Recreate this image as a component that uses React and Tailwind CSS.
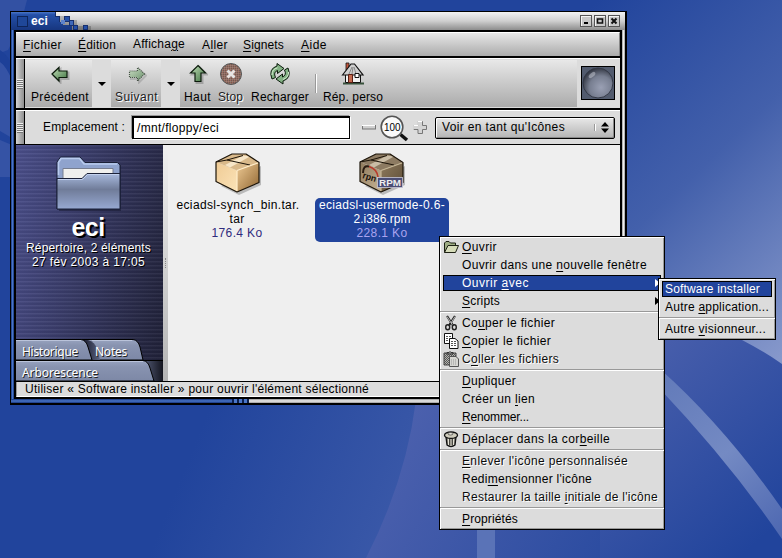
import React, { useLayoutEffect, useRef, useState } from "react";

/* One line of text tracked to a given width; "_" marks the mnemonic letter. */
function T({ w, children, className = "" }) {
  const ref = useRef(null);
  const [ls, setLs] = useState(0);
  const text = children;
  const at = text.search(/_(?=[A-Za-zÀ-ÿ])/);
  const marked = at >= 0 && !text.includes("synch");
  const plain = marked ? text.slice(0, at) + text.slice(at + 1) : text;
  useLayoutEffect(() => {
    const el = ref.current;
    const prev = el.style.letterSpacing;
    el.style.letterSpacing = "0px";
    const natural = el.getBoundingClientRect().width;
    el.style.letterSpacing = prev;
    setLs((w - natural) / plain.length);
  }, [w, plain]);
  return (
    <div className={"shrink-0 whitespace-pre " + className} style={{ width: w }}>
      <span ref={ref} style={{ letterSpacing: ls }}>
        {marked ? (
          <>
            {text.slice(0, at)}
            <span className="underline decoration-1 underline-offset-2">{text[at + 1]}</span>
            {text.slice(at + 2)}
          </>
        ) : (
          text
        )}
      </span>
    </div>
  );
}

const ETCH = "text-[#0c0c0c] [text-shadow:1px_1px_0_#fff]";

function Wallpaper() {
  return (
    <svg className="absolute inset-0" width="782" height="558">
      <defs>
        <linearGradient id="wa" gradientUnits="userSpaceOnUse" x1="545" y1="50" x2="810" y2="330">
          <stop offset="0" stopColor="#21449c" />
          <stop offset=".5" stopColor="#4360ab" />
          <stop offset="1" stopColor="#8698cb" />
        </linearGradient>
        <linearGradient id="wb" gradientUnits="userSpaceOnUse" x1="600" y1="360" x2="760" y2="540">
          <stop offset="0" stopColor="#4c61ad" />
          <stop offset="1" stopColor="#21449c" />
        </linearGradient>
        <linearGradient id="wc" gradientUnits="userSpaceOnUse" x1="200" y1="430" x2="420" y2="520">
          <stop offset="0" stopColor="#21449c" />
          <stop offset="1" stopColor="#3c5aa9" />
        </linearGradient>
        <linearGradient id="wd" gradientUnits="userSpaceOnUse" x1="400" y1="430" x2="620" y2="558">
          <stop offset="0" stopColor="#4b60ad" />
          <stop offset="1" stopColor="#2a4ba0" />
        </linearGradient>
        <linearGradient id="we" gradientUnits="userSpaceOnUse" x1="665" y1="380" x2="782" y2="530">
          <stop offset="0" stopColor="#637bba" />
          <stop offset=".5" stopColor="#748ac3" />
          <stop offset="1" stopColor="#4f69b2" />
        </linearGradient>
      </defs>
      <rect width="782" height="558" fill="#21449c" />
      <path d="M0 0H27Q20 30 8 50L0 53Z" fill="#3351a3" />
      <path d="M0 54Q6 60 12 72V177H0Z" fill="#3553a5" />
      <path d="M0 50Q8 55 12 65V80Q6 66 0 62Z" fill="#1d4098" />
      <path d="M0 131L12 138V145L0 140Z" fill="#21449c" />
      <rect x="400" width="382" height="370" fill="url(#wa)" />
      <rect y="400" width="420" height="158" fill="url(#wc)" />
      <path d="M416 400Q406 480 366 558H640V400Z" fill="url(#wd)" />
      <path d="M600 290Q700 318 742 340Q765 352 782 364V558H600Z" fill="url(#wb)" />
      <path d="M660 369Q725 427 782 509V539Q730 463 660 389Z" fill="url(#we)" />
      <path d="M477 525H495V558H477Z" fill="#5a73b7" />
    </svg>
  );
}

function WinButton({ children }) {
  return (
    <div className="h-3 w-3 border border-[#555] bg-[#c8c8c8] shadow-[inset_1px_1px_0_#f4f4f4]">
      <svg width="10" height="10" className="block">{children}</svg>
    </div>
  );
}

function TitleBar() {
  return (
    <div className="relative flex h-[18px] items-center bg-gradient-to-b from-[#f2f2f2] via-[#cfcfcf] to-[#8d8d8d]">
      <svg className="absolute top-0 left-0" width="84" height="18" shapeRendering="crispEdges">
        <defs>
          <linearGradient id="tb" x1="0" y1="0" x2="0" y2="1">
            <stop offset="0" stopColor="#4a76c8" />
            <stop offset=".15" stopColor="#2450a8" />
            <stop offset="1" stopColor="#17367f" />
          </linearGradient>
        </defs>
        <path d="M46 4H58V8H66V14H80V18H46Z" fill="#000" opacity=".2" />
        <path d="M0 0H45V4H49V10H52V13H61V18H0Z" fill="url(#tb)" />
        <path d="M44.500 0V4.500H48.500V10" fill="none" stroke="#142d6b" />
        <rect x="53.500" y="4.500" width="5" height="5" fill="#2450a8" stroke="#17306e" />
        <rect x="58.500" y="8.500" width="4" height="5" fill="#3f69bb" stroke="#17306e" />
        <rect x="50" y="8" width="4" height="4" fill="#5d83cb" />
        <rect x="62.500" y="13.500" width="4" height="4" fill="#2450a8" stroke="#17306e" />
        <rect x="72.500" y="13.500" width="4" height="4" fill="#2450a8" stroke="#17306e" />
        <rect x="6.500" y="4.500" width="10" height="10" fill="#1f4798" stroke="#0e2458" />
      </svg>
      <T w={17} className="relative ml-5 font-bold text-white">eci</T>
      <div className="ml-auto mr-[5px] flex gap-[2px]">
        <WinButton><path d="M3 6h4v2h-4z" /></WinButton>
        <WinButton><path d="M2.500 3H7.500V7H2.500Z" fill="none" stroke="#111" strokeWidth="1.600" /></WinButton>
        <WinButton><path d="M2.500 2.500L7.500 7.500M7.500 2.500L2.500 7.500" stroke="#111" strokeWidth="2" /></WinButton>
      </div>
    </div>
  );
}

function Handle() {
  return (
    <div className="flex w-[9px] shrink-0 flex-col items-center justify-center gap-px border-r border-black bg-gradient-to-r from-[#d4d4d4] to-[#8f8f8f]">
      {[0, 1, 2, 3, 4].map((i) => (
        <div key={i} className="h-px w-[6px] bg-[#eee] shadow-[0_1px_0_#777]" />
      ))}
    </div>
  );
}

const GREY = "bg-gradient-to-b from-[#e8e8e8] to-[#ababab]";

function Tool({ icon, label, w, className, dim }) {
  return (
    <div className={"flex flex-col items-center " + className}>
      <div className="flex h-7 items-center justify-center">{icon}</div>
      <T w={w} className={dim ? "text-[#222] [text-shadow:1px_1px_0_#fff]" : ""}>{label}</T>
    </div>
  );
}

function Arrow({ d, dim }) {
  return (
    <svg width="20" height="20" className={dim ? "opacity-70" : ""}>
      <defs>
        <linearGradient id={dim ? "ag2" : "ag1"} x1="0" y1="0" x2="1" y2="1">
          <stop offset="0" stopColor="#c4dfbb" />
          <stop offset="1" stopColor="#3f7440" />
        </linearGradient>
      </defs>
      <path d={d} transform="translate(1.5 1.5)" fill="none" stroke="#000" strokeOpacity=".2" strokeWidth="2" />
      <path d={d} fill={dim ? "url(#ag2)" : "url(#ag1)"} stroke="#0b1a0b" strokeWidth="1.2" strokeDasharray={dim ? "1 1" : undefined} />
    </svg>
  );
}

function DropMark({ className }) {
  return (
    <div className={"flex shrink-0 justify-center bg-[#dcdcdc] pt-[22px] " + className}>
      <svg width="8" height="4"><path d="M0 0H8L4 4Z" /></svg>
    </div>
  );
}

const StopIcon = (
  <svg width="24" height="24">
    <defs>
      <pattern id="stip" width="2" height="2" patternUnits="userSpaceOnUse">
        <rect width="2" height="2" fill="#a66450" />
        <rect width="1" height="1" fill="#606060" />
        <rect x="1" y="1" width="1" height="1" fill="#858585" />
      </pattern>
    </defs>
    <circle cx="12" cy="12" r="10.5" fill="url(#stip)" stroke="#555" />
    <path d="M8.500 8.500L15.500 15.500M15.500 8.500L8.500 15.500" stroke="#e8e4e2" strokeWidth="3" />
  </svg>
);

const ReloadIcon = (
  <svg width="24" height="24" fill="#83b284" stroke="#0b1a0b" strokeWidth="1">
    <path d="M4 17Q0 7 9 4V1.500L16 6.500L9.500 11.500V8.500Q5 10 7.500 15.500Z" />
    <path d="M20 6Q24 16 15 19V22L8 17L14.500 12V15Q19 13 16.500 8Z" />
    <path d="M4 13Q4 7 9.500 5.800M20.500 10Q21 15 15 17.500" fill="none" stroke="#d4ead0" />
  </svg>
);

const HomeIcon = (
  <svg width="24" height="24">
    <path d="M2 21.500H23" stroke="#37503a" strokeWidth="2" />
    <path d="M4.500 12H19.500V20.500H4.500Z" fill="#f2f2f2" stroke="#111" />
    <path d="M5 1H8V8H5Z" fill="#c1553c" stroke="#111" strokeWidth=".8" />
    <path d="M1.500 13L10 2H13.500L22 13H4.500Z" fill="#cfcfcf" stroke="#111" strokeWidth="1.200" />
    <path d="M8 12L11 5M11 12L12 5M15 12L13 5" stroke="#888" />
    <path d="M7.500 12.500H11.500V20.500H7.500Z" fill="#c4694f" stroke="#5a1f12" />
    <path d="M14 11.500H18V15.500H14Z" fill="#fff" stroke="#111" />
  </svg>
);

function Toolbar() {
  return (
    <div className="flex h-[50px] border-t border-white bg-[#dcdcdc]">
      <Handle />
      <div className="mt-px mb-px flex flex-1">
        <Tool className={"w-[67px] pl-[3px] " + GREY} w={58} label="Précédent" icon={<Arrow d="M2 10L9 3.500V7H17V13.500H9V17Z" />} />
        <DropMark className="w-[19px]" />
        <Tool className={"w-[50px] pl-px " + GREY} w={43} label="Suivant" dim icon={<Arrow dim d="M17.500 10L10.500 3.500V7H2.500V13.500H10.500V17Z" />} />
        <DropMark className="w-[19px]" />
        <div className={"flex flex-1 " + GREY}>
          <Tool className="ml-1 w-[27px]" w={27} label="Haut" icon={<Arrow d="M10 1.500L17.500 9H13V17.500H7V9H2.500Z" />} />
          <Tool className="ml-[7px] w-[25px]" w={25} label="Stop" dim icon={StopIcon} />
          <Tool className="ml-2 w-[58px]" w={58} label="Recharger" icon={ReloadIcon} />
          <div className="mt-[14px] ml-[6px] h-[19px] w-[2px] border-l border-[#999] bg-white" />
          <Tool className="ml-[6px] w-[60px]" w={60} label="Rép. perso" icon={HomeIcon} />
        </div>
        <div className="flex w-[43px] items-center justify-center pr-px pb-px">
          <svg width="34" height="34">
            <defs>
              <radialGradient id="orb" cx=".6" cy=".65" r=".7">
                <stop offset="0" stopColor="#9aa0b4" />
                <stop offset=".55" stopColor="#777e90" />
                <stop offset="1" stopColor="#262a35" />
              </radialGradient>
            </defs>
            <rect x=".5" y=".5" width="33" height="33" fill="#525b6e" stroke="#000" />
            <circle cx="17" cy="17" r="15" fill="url(#orb)" stroke="#343947" />
            <ellipse cx="11" cy="9" rx="4" ry="2" fill="#c9cdd8" opacity=".5" transform="rotate(-40 11 9)" />
          </svg>
        </div>
      </div>
    </div>
  );
}

function LocationBar() {
  return (
    <div className="flex h-[34px] items-center border-t border-white bg-[#dcdcdc]">
      <div className="flex self-stretch"><Handle /></div>
      <T w={82} className="-mt-px ml-[18px]">Emplacement :</T>
      <div className="ml-[7px] flex h-[23px] w-[218px] items-center border border-t-2 border-l-2 border-black bg-white pb-px pl-[3px] shadow-[1px_1px_0_#fff,-1px_-1px_0_#999]">
        <T w={82}>/mnt/floppy/eci</T>
      </div>
      <svg className="ml-[11px]" width="68" height="30">
        <rect x="1.500" y="12.500" width="13" height="3.500" fill="#d0d0d0" stroke="#777" />
        <path d="M1 12.500H14" stroke="#fff" />
        <path d="M39.500 21.500L46 27" stroke="#111" strokeWidth="3.500" />
        <circle cx="31" cy="14" r="10.800" fill="#fafafa" stroke="#555" strokeWidth="1.600" />
        <path d="M57 8.500H61.500V12.500H65.500V16.500H61.500V20.500H57V16.500H53V12.500H57Z" fill="#d4d4d4" stroke="#777" />
        <path d="M57 12.500V8.500H61M53 16V12.500H57" stroke="#fff" fill="none" />
        <text x="23" y="17.500" fontSize="10" textLength="16.500" lengthAdjust="spacingAndGlyphs" fontFamily="Liberation Sans, sans-serif">100</text>
      </svg>
      <div className="ml-[6px] flex h-[22px] w-[180px] items-center rounded-[2px] border border-black bg-gradient-to-b from-[#e8e8e8] to-[#b4b4b4] pl-[6px] shadow-[inset_1px_1px_0_#fff,inset_-1px_-1px_0_#888]">
        <T w={123} className="-mt-px">Voir en tant qu'Icônes</T>
        <div className="ml-[29px] h-[7px] w-[2px] border-l border-[#999] bg-white" />
        <svg className="ml-[5px]" width="8" height="11"><path d="M0 4.500L4 0L8 4.500ZM0 6.500L4 11L8 6.500Z" /></svg>
      </div>
    </div>
  );
}

function FolderArt() {
  return (
    <svg width="68" height="58" className="block">
      <defs>
        <linearGradient id="fo" x1="0" y1="0" x2="0" y2="1">
          <stop offset="0" stopColor="#a9bbdf" />
          <stop offset=".45" stopColor="#707c99" />
          <stop offset="1" stopColor="#97a9d2" />
        </linearGradient>
      </defs>
      <path d="M3 55V8L6 3H26L31 9H65V55Z" fill="#14162c" opacity=".5" transform="translate(1 1)" />
      <path d="M2 54V7L5.500 2H25L30 7.500H62.500L65 10V54Z" fill="#8fa3cd" stroke="#1b2138" />
      <path d="M3.500 20V7.500L6 3.500H24.500L29 9H62" fill="none" stroke="#b9cbee" strokeWidth="1.500" />
      <path d="M8 13.500H58V25H8Z" fill="#f0f0ee" stroke="#777e90" />
      <path d="M2 23.500H27L32 18.500H65V54H2Z" fill="url(#fo)" stroke="#1b2138" />
      <path d="M3 24.500H27.500L32.500 19.500H64" fill="none" stroke="#c3d1ee" />
    </svg>
  );
}

function Sidebar() {
  return (
    <div className="flex w-[147px] flex-col items-center bg-[repeating-linear-gradient(180deg,rgba(255,255,255,0.05)_0px,rgba(255,255,255,0.05)_1px,rgba(0,0,0,0.06)_2px,rgba(0,0,0,0.06)_4px),linear-gradient(100deg,#4b4f8c,#1f2036)] pt-[10px] text-white">
      <div className="pr-[2px]"><FolderArt /></div>
      <T w={33} className="-mt-px mr-[3px] text-[25px] leading-[30px] font-bold [text-shadow:2px_2px_0_#000]">eci</T>
      <T w={125} className="-mt-px mr-[2px] leading-[14px] [text-shadow:1px_1px_0_#000]">Répertoire, 2 éléments</T>
      <T w={113} className="mr-[2px] leading-[14px] [text-shadow:1px_1px_0_#000]">27 fév 2003 à 17:05</T>
      <div className="relative mt-auto h-[42px] w-[147px] font-['Noto_Sans'] text-[12px]">
        <svg className="absolute inset-0" width="147" height="42">
          <defs>
            <linearGradient id="tab" x1="0" y1="0" x2="0" y2="1">
              <stop offset="0" stopColor="#98a3bf" />
              <stop offset=".3" stopColor="#8893b0" />
              <stop offset="1" stopColor="#7d88a6" />
            </linearGradient>
            <linearGradient id="tsh" x1="0" y1="0" x2="1" y2="0">
              <stop offset="0" stopColor="#15172a" />
              <stop offset="1" stopColor="#5c6480" />
            </linearGradient>
            <linearGradient id="tse" gradientUnits="userSpaceOnUse" x1="130" y1="0" x2="147" y2="0">
              <stop offset="0" stopColor="#4c536c" />
              <stop offset="1" stopColor="#14151f" />
            </linearGradient>
          </defs>
          <path d="M60 .5H117Q122 1 124 8L127 21H60Z" fill="url(#tab)" stroke="#000" />
          <path d="M66 1H72Q79 3 81 10L84 21H72Z" fill="url(#tsh)" />
          <path d="M-1 .5H65Q70 1 72 8L76 21H-1Z" fill="url(#tab)" stroke="#000" />
          <rect y="21.500" width="147" height="21" fill="url(#tse)" />
          <path d="M-1 21.500H127Q132 22 134 29L138 42H-1Z" fill="url(#tab)" stroke="#000" />
          <path d="M127 21.500H147" stroke="#000" />
          <path d="M0 1.500H65M76 1.500H116M0 22.500H127" stroke="#bac3da" />
        </svg>
        <div className="relative flex h-[21px] items-center pt-[4px] pl-[6px] [text-shadow:1px_1px_0_#222]">
          <T w={56}>Historique</T>
          <T w={32} className="ml-[17px]">Notes</T>
        </div>
        <div className="relative flex h-[21px] items-center pt-[4px] pl-[6px] [text-shadow:1px_1px_0_#222]">
          <T w={76}>Arborescence</T>
        </div>
      </div>
    </div>
  );
}

function BoxArt({ rpm }) {
  const s = rpm ? ["#c9b597", "#8e7a5c", "#5a4a35"] : ["#fbe3b8", "#efcb95", "#8f6531"];
  const id = rpm ? "bxr" : "bx";
  return (
    <svg width="50" height="44" className="block">
      <defs>
        <linearGradient id={id + "l"} x1="0" y1="0" x2="1" y2="1">
          <stop offset="0" stopColor={s[1]} />
          <stop offset="1" stopColor={s[0]} />
        </linearGradient>
        <linearGradient id={id + "r"} x1="0" y1="0" x2="1" y2="1">
          <stop offset="0" stopColor={s[1]} />
          <stop offset="1" stopColor={s[2]} />
        </linearGradient>
      </defs>
      <path d="M8 34L26 43L48 33V14Z" fill="#000" opacity=".22" />
      <path d="M3 10L24 18.500V40L3 29.500Z" fill={`url(#${id}l)`} />
      <path d="M24 18.500L46 10.500V30.500L24 40Z" fill={`url(#${id}r)`} />
      <path d="M3 10L19 2H33L46 10.500L24 18.500Z" fill={rpm ? "#8d7b62" : "#d9b98a"} />
      <path d="M12 13L30 3.500L37 4.500L17 15.500Z" fill={rpm ? "#cabda6" : "#f7e6c8"} />
      <path d="M3 10L19 2H33L46 10.500V30.500L24 40L3 29.500Z" fill="none" stroke="#1c1409" strokeWidth="1.200" strokeLinejoin="round" />
      <path d="M3 10L14 8L30 3.500M14 8L37 13" fill="none" stroke="#1c1409" />
      <path d="M24 19V39M24 18.500L45 11" stroke={rpm ? "#c4b494" : "#ffedca"} strokeWidth="1.200" />
      {rpm && (
        <g>
          <path d="M6 21Q6 13 12 14.500" fill="none" stroke="#2a1c12" strokeWidth="2" />
          <path d="M12 14.500Q20 17 21 25" fill="none" stroke="#b8392a" strokeWidth="1.600" />
          <text x="5" y="26" fontSize="9" fontWeight="bold" fill="#1a120b" fontFamily="Liberation Sans, sans-serif" textLength="14" lengthAdjust="spacingAndGlyphs" transform="rotate(16 5 26)">rpn</text>
          <rect x="20.500" y="25.500" width="25" height="10" fill="#4b4d74" stroke="#c8c8d8" strokeWidth=".8" />
          <text x="22" y="34" fontSize="9.500" fontWeight="bold" fill="#eee" fontFamily="Liberation Sans, sans-serif" textLength="22" lengthAdjust="spacingAndGlyphs">RPM</text>
        </g>
      )}
    </svg>
  );
}

function Files() {
  return (
    <div className="flex flex-1 items-start bg-[#efefef] pt-[7px] leading-[14px]">
      <div className="ml-[3px] flex w-[134px] flex-col items-center">
        <div className="mb-[2px]"><BoxArt /></div>
        <T w={123}>eciadsl-synch_bin.tar.</T>
        <T w={15} className="mr-[2px]">tar</T>
        <T w={51} className="mr-[2px] text-[#2f2b7d]">176.4 Ko</T>
      </div>
      <div className="ml-[10px] flex w-[134px] flex-col items-center">
        <div className="mb-[2px]"><BoxArt rpm /></div>
        <div className="flex h-11 w-full flex-col items-center rounded-[5px] bg-[#21449c] text-white">
          <T w={126}>eciadsl-usermode-0.6-</T>
          <T w={57}>2.i386.rpm</T>
          <T w={51} className="text-[#a9a3ef]">228.1 Ko</T>
        </div>
      </div>
    </div>
  );
}

function FileWindow() {
  return (
    <div className="absolute top-[11px] left-[10px] flex h-[394px] w-[617px] flex-col border border-r-2 border-b-2 border-black">
      <TitleBar />
      <div className="flex flex-1">
        <div className="w-[3px] bg-gradient-to-r from-[#17367f] via-[#4a76c8] to-[#17367f]" />
        <div className="flex w-[608px] flex-col border-2 border-black bg-black">
          <div className={"flex h-6 items-center border-t border-r border-t-white border-r-[#888] " + GREY}>
            <T w={39} className="ml-[7px]">_Fichier</T>
            <T w={38} className="ml-4">_Édition</T>
            <T w={52} className="-mt-[2px] ml-[17px]">Afficha_ge</T>
            <T w={26} className="ml-[17px]">A_ller</T>
            <T w={41} className="ml-[15px]">_Signets</T>
            <T w={26} className="ml-[17px]">_Aide</T>
          </div>
          <div className="h-[2px]" />
          <Toolbar />
          <div className="h-[2px]" />
          <LocationBar />
          <div className="h-px" />
          <div className="flex h-[236px]">
            <Sidebar />
            <div className="flex w-[5px] items-center bg-gradient-to-b from-[#f0f0f0] to-[#b4b4b4]">
              <div className="ml-[2px] h-[10px] border-l border-dotted border-[#888]" />
            </div>
            <Files />
          </div>
          <div className="h-px" />
          <div className="flex h-[15px] items-end border-b border-l border-b-white border-l-[#999] bg-[#dcdcdc] pl-[8px]">
            <T w={344} className="leading-[14px]">Utiliser « Software installer » pour ouvrir l'élément sélectionné</T>
          </div>
        </div>
        <div className="w-[3px] bg-gradient-to-r from-[#9a9a9a] via-[#eee] to-[#999]" />
      </div>
      <div className="flex h-1 bg-gradient-to-b from-[#17367f] via-[#4a76c8] to-[#17367f]">
        <div className="w-[221px]" />
        <div className="w-[17px] bg-[repeating-linear-gradient(90deg,#0c1f4d_0px,#0c1f4d_2px,#4a76c8_2px,#4a76c8_5px)]" />
        <div className="flex-1 bg-gradient-to-b from-[#999] via-[#eee] to-[#999]" />
      </div>
    </div>
  );
}

function Item({ icon, w, label, on, sub, etch, narrow }) {
  return (
    <div className="mx-[3px] flex h-[18px] items-center">
      <div className={"flex h-4 flex-1 items-center " + (on ? "bg-[#21449c] text-white shadow-[inset_0_0_0_1px_#000]" : "")}>
        {!narrow && <div className="-ml-[2px] flex w-[21px] shrink-0 justify-center pr-px">{icon}</div>}
        <T w={w} className={(narrow ? "ml-[3px] " : "") + (etch ? ETCH : "")}>{label}</T>
        {sub && (
          <svg className="mr-px ml-auto shrink-0" width="5" height="8">
            <path d="M0 0L5 4L0 8Z" fill={on ? "#fff" : "#000"} />
          </svg>
        )}
      </div>
    </div>
  );
}

function Sep() {
  return <div className="my-px h-[2px] border-t border-b border-t-[#999] border-b-white" />;
}

const MENU_BOX = "absolute border border-black bg-[#dcdcdc] pt-px shadow-[inset_1px_1px_0_#fff,inset_-1px_-1px_0_#999]";

const OpenIcon = (
  <svg width="16" height="14">
    <path d="M1.500 12.500V3L3 1.500H6L7.500 3H12.500V5" fill="#9fae84" stroke="#1d2114" />
    <path d="M1.500 12.500L5 5.500H15.500L12.500 12.500Z" fill="#d6dcb9" stroke="#1d2114" />
  </svg>
);
const CutIcon = (
  <svg width="14" height="16" fill="none" stroke="#222" strokeWidth="1.400">
    <path d="M3 1L9 10.500M11 1L5 10.500" stroke="#222" strokeWidth="2.200" />
    <path d="M3 1.500L8.500 10M11 1.500L7 8" stroke="#ddd" strokeWidth=".8" />
    <ellipse cx="3.700" cy="12.300" rx="2" ry="2.500" />
    <ellipse cx="10.300" cy="12.300" rx="2" ry="2.500" />
  </svg>
);
const CopyIcon = (
  <svg width="16" height="16" fill="#fff" stroke="#111">
    <path d="M1.500 .5H9.500V10.500H1.500Z" />
    <path d="M3 3.500H5M6 3.500H8M3 5.500H5M3 7.500H5" stroke="#555" />
    <path d="M6.500 5.500H12L15 8V15.500H6.500Z" />
    <path d="M8 8.500H10M11 8.500H13M8 10.500H10M11 10.500H13M8 12.500H10M11 12.500H13" stroke="#555" />
  </svg>
);
const PasteIcon = (
  <svg width="17" height="16">
    <defs>
      <pattern id="chk" width="2" height="2" patternUnits="userSpaceOnUse">
        <rect width="2" height="2" fill="#b5b5b0" />
        <rect width="1" height="1" fill="#555" />
        <rect x="1" y="1" width="1" height="1" fill="#555" />
      </pattern>
    </defs>
    <path d="M1 2H13V14H1Z" fill="url(#chk)" stroke="#444" />
    <path d="M4 3V1.500H6L7 .5L8 1.500H10V3Z" fill="#999" stroke="#333" />
    <path d="M6.500 5.500H13L15.500 8V15.500H6.500Z" fill="#d6d6d2" stroke="#555" />
    <path d="M8 9H14M8 11H14M8 13H14" stroke="#999" strokeDasharray="1 1" />
  </svg>
);
const TrashIcon = (
  <svg width="16" height="17">
    <path d="M3 6H13L12 14Q8 17 4 14Z" fill="#8d8b80" stroke="#111" strokeWidth="1.300" />
    <path d="M5.500 7V14M8 7V15M10.500 7V14" stroke="#e4e2d6" />
    <path d="M6.700 7V14M9.300 7V14" stroke="#3a3934" />
    <ellipse cx="8" cy="4.200" rx="6.500" ry="3.200" fill="#d0cdbd" stroke="#111" strokeWidth="1.300" />
    <ellipse cx="7.500" cy="2.800" rx="2.500" ry="1.200" fill="#f3f1e6" stroke="#333" strokeWidth=".7" />
  </svg>
);

export default function App() {
  return (
    <div className="relative h-[558px] w-[782px] overflow-hidden font-['Liberation_Sans',Arial,sans-serif] text-[12px] leading-[18px] text-black">
      <Wallpaper />
      <FileWindow />
      <div className={MENU_BOX + " top-[236px] left-[439px] h-[294px] w-[226px]"}>
        <Item w={35} label="_Ouvrir" icon={OpenIcon} />
        <Item w={185} label="Ouvrir dans une _nouvelle fenêtre" />
        <Item w={67} label="Ouvrir _avec" on sub />
        <Item w={38} label="_Scripts" sub />
        <Sep />
        <Item w={93} label="Co_uper le fichier" icon={CutIcon} />
        <Item w={89} label="_Copier le fichier" icon={CopyIcon} />
        <Item w={97} label="C_oller les fichiers" icon={PasteIcon} etch />
        <Sep />
        <Item w={54} label="_Dupliquer" />
        <Item w={73} label="Créer un _lien" />
        <Item w={67} label="_Renommer..." />
        <Sep />
        <Item w={148} label="Déplacer dans la cor_beille" icon={TrashIcon} />
        <Sep />
        <Item w={166} label="_Enlever l'icône personnalisée" etch />
        <Item w={130} label="Redi_mensionner l'icône" />
        <Item w={196} label="Restaurer la taille _initiale de l'icône" etch />
        <Sep />
        <Item w={56} label="_Propriétés" />
      </div>
      <div className={MENU_BOX + " top-[278px] left-[658px] h-[62px] w-[118px]"}>
        <Item narrow w={95} label="Software installer" on />
        <Item narrow w={104} label="Autre _application..." />
        <Sep />
        <Item narrow w={101} label="Autre _visionneur..." />
      </div>
    </div>
  );
}
